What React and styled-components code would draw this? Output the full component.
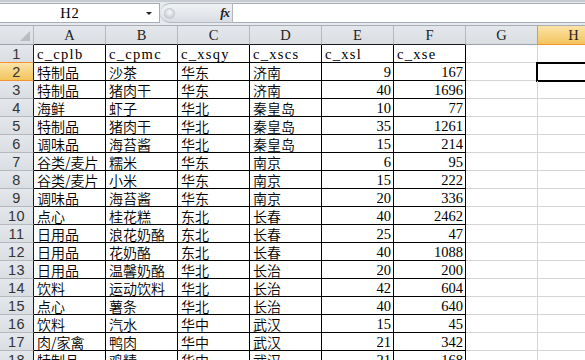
import React from "react";
import styled, { createGlobalStyle, css } from "styled-components";

const GlobalStyle = createGlobalStyle`
  html, body {
    margin: 0;
    padding: 0;
    background: #ffffff;
    overflow: hidden;
  }
`;

const Page = styled.div`
  width: 585px;
  height: 360px;
  overflow: hidden;
  background: #ffffff;
`;

const FormulaBar = styled.div`
  height: 26px;
  box-sizing: border-box;
  padding-top: 3px;
  background: linear-gradient(#c7ccd2 0, #c7ccd2 2px, #e6e9ed 2px);
  border-bottom: 1px solid #a9aeb5;
  display: flex;
  align-items: flex-start;
`;

const NameBox = styled.div`
  width: 160px;
  height: 20px;
  box-sizing: border-box;
  background: #ffffff;
  border: 1px solid #a7adb5;
  border-left: none;
  display: flex;
  align-items: center;
  font-family: "Liberation Serif", serif;
  font-size: 14.5px;
  letter-spacing: 1px;
  color: #000;
`;

const NameText = styled.span`
  flex: 1;
  text-align: center;
  padding-right: 6px;
`;

const DropArrow = styled.span`
  width: 0;
  height: 0;
  margin-right: 7px;
  border-left: 3px solid transparent;
  border-right: 3px solid transparent;
  border-top: 3px solid #222;
`;

const FxPanel = styled.div`
  width: 73px;
  height: 20px;
  box-sizing: border-box;
  border: 1px solid #b3b8bf;
  border-left: none;
  border-radius: 10px 0 0 10px;
  background: linear-gradient(#f1f3f5, #d9dde2);
  display: flex;
  align-items: center;
  justify-content: space-between;
  padding: 0 2px 0 4px;
`;

const Knob = styled.span`
  width: 9px;
  height: 9px;
  border-radius: 50%;
  background: radial-gradient(circle at 50% 35%, #f6f7f9 0, #cfd3d9 70%);
  border: 1px solid #c2c7cd;
`;

const FxLabel = styled.span`
  font-family: "Liberation Serif", serif;
  font-style: italic;
  font-weight: bold;
  font-size: 13px;
  color: #222;
  padding-right: 1px;
  letter-spacing: -1px;
`;

const FormulaInput = styled.div`
  flex: 1;
  height: 20px;
  box-sizing: border-box;
  background: #ffffff;
  border-top: 1px solid #a7adb5;
  border-bottom: 1px solid #a7adb5;
`;

const Sheet = styled.div`
  display: grid;
  grid-template-columns: 34px repeat(8, 72px);
  grid-template-rows: 19px;
  grid-auto-rows: 18px;
  width: 610px;
`;

const headerBase = css`
  box-sizing: border-box;
  display: flex;
  align-items: center;
  justify-content: center;
  background: linear-gradient(#e4e7eb, #dadee3);
  color: #222;
`;

const Corner = styled.div`
  ${headerBase};
  border-right: 1px solid #b5b9be;
  border-bottom: 1px solid #9ea3a9;
  position: relative;
  &::after {
    content: "";
    position: absolute;
    right: 3px;
    bottom: 3px;
    border-left: 10px solid transparent;
    border-bottom: 10px solid #b9bdc2;
  }
`;

const ColHeader = styled.div`
  ${headerBase};
  font-family: "Liberation Serif", serif;
  font-size: 14.5px;
  border-right: 1px solid #b5b9be;
  border-bottom: 1px solid ${(p) => (p.$inData ? "#1a1a1a" : "#9ea3a9")};
  ${(p) =>
    p.$selected &&
    css`
      background: linear-gradient(#fbe3a8, #f3c45c);
      border-bottom-color: #f29436;
      border-left: 1px solid #f29436;
      margin-left: -1px;
    `}
`;

const RowHeader = styled.div`
  ${headerBase};
  font-family: "Liberation Sans", sans-serif;
  font-size: 14.5px;
  letter-spacing: 0.5px;
  color: #333;
  border-right: 1px solid #1a1a1a;
  border-bottom: 1px solid #b5b9be;
  ${(p) =>
    p.$selected &&
    css`
      background: linear-gradient(#fbe3a8, #f3c45c);
      border-bottom-color: #f29436;
      border-top: 1px solid #f29436;
      margin-top: -1px;
    `}
`;

const Cell = styled.div`
  box-sizing: border-box;
  border-right: 1px solid ${(p) => (p.$inData ? "#000" : "#d4d4d4")};
  border-bottom: 1px solid ${(p) => (p.$inData ? "#000" : "#d4d4d4")};
  padding: 0 2px 0 3px;
  white-space: nowrap;
  color: #000;
  display: flex;
  align-items: flex-end;
  justify-content: ${(p) => (p.$num ? "flex-end" : "flex-start")};
  font-family: ${(p) =>
    p.$latin
      ? '"Liberation Serif", serif'
      : '"Noto Sans CJK SC", "Noto Sans", sans-serif'};
  font-weight: ${(p) => (p.$latin ? 400 : 350)};
  font-size: ${(p) => (p.$latin ? "14.5px" : "14px")};
  letter-spacing: ${(p) => (p.$label ? "1.3px" : "0")};
  line-height: 16px;
  position: relative;
  ${(p) =>
    p.$active &&
    css`
      &::after {
        content: "";
        position: absolute;
        left: -2px;
        top: -1px;
        right: -2px;
        bottom: -2px;
        border: 2px solid #000;
      }
    `}
`;

const columns = ["A", "B", "C", "D", "E", "F", "G", "H"];

const header = ["c_cplb", "c_cpmc", "c_xsqy", "c_xscs", "c_xsl", "c_xse"];

const rows = [
  ["特制品", "沙茶", "华东", "济南", 9, 167],
  ["特制品", "猪肉干", "华东", "济南", 40, 1696],
  ["海鲜", "虾子", "华北", "秦皇岛", 10, 77],
  ["特制品", "猪肉干", "华北", "秦皇岛", 35, 1261],
  ["调味品", "海苔酱", "华北", "秦皇岛", 15, 214],
  ["谷类/麦片", "糯米", "华东", "南京", 6, 95],
  ["谷类/麦片", "小米", "华东", "南京", 15, 222],
  ["调味品", "海苔酱", "华东", "南京", 20, 336],
  ["点心", "桂花糕", "东北", "长春", 40, 2462],
  ["日用品", "浪花奶酪", "东北", "长春", 25, 47],
  ["日用品", "花奶酪", "东北", "长春", 40, 1088],
  ["日用品", "温馨奶酪", "华北", "长治", 20, 200],
  ["饮料", "运动饮料", "华北", "长治", 42, 604],
  ["点心", "薯条", "华北", "长治", 40, 640],
  ["饮料", "汽水", "华中", "武汉", 15, 45],
  ["肉/家禽", "鸭肉", "华中", "武汉", 21, 342],
  ["特制品", "鸡精", "华中", "武汉", 21, 168],
];

export default function App() {
  return (
    <Page>
      <GlobalStyle />
      <FormulaBar>
        <NameBox>
          <NameText>H2</NameText>
          <DropArrow />
        </NameBox>
        <FxPanel>
          <Knob />
          <FxLabel>fx</FxLabel>
        </FxPanel>
        <FormulaInput />
      </FormulaBar>
      <Sheet>
        <Corner />
        {columns.map((c, i) => (
          <ColHeader key={c} $inData={i < 6} $selected={c === "H"}>
            {c}
          </ColHeader>
        ))}

        <RowHeader>1</RowHeader>
        {header.map((h) => (
          <Cell key={h} $inData $latin $label>
            {h}
          </Cell>
        ))}
        <Cell />
        <Cell />

        {rows.map((r, ri) => {
          const n = ri + 2;
          return (
            <React.Fragment key={n}>
              <RowHeader $selected={n === 2}>{n}</RowHeader>
              {r.map((v, ci) => (
                <Cell
                  key={ci}
                  $inData
                  $num={typeof v === "number"}
                  $latin={typeof v === "number"}
                >
                  {v}
                </Cell>
              ))}
              <Cell />
              <Cell $active={n === 2} />
            </React.Fragment>
          );
        })}
      </Sheet>
    </Page>
  );
}
